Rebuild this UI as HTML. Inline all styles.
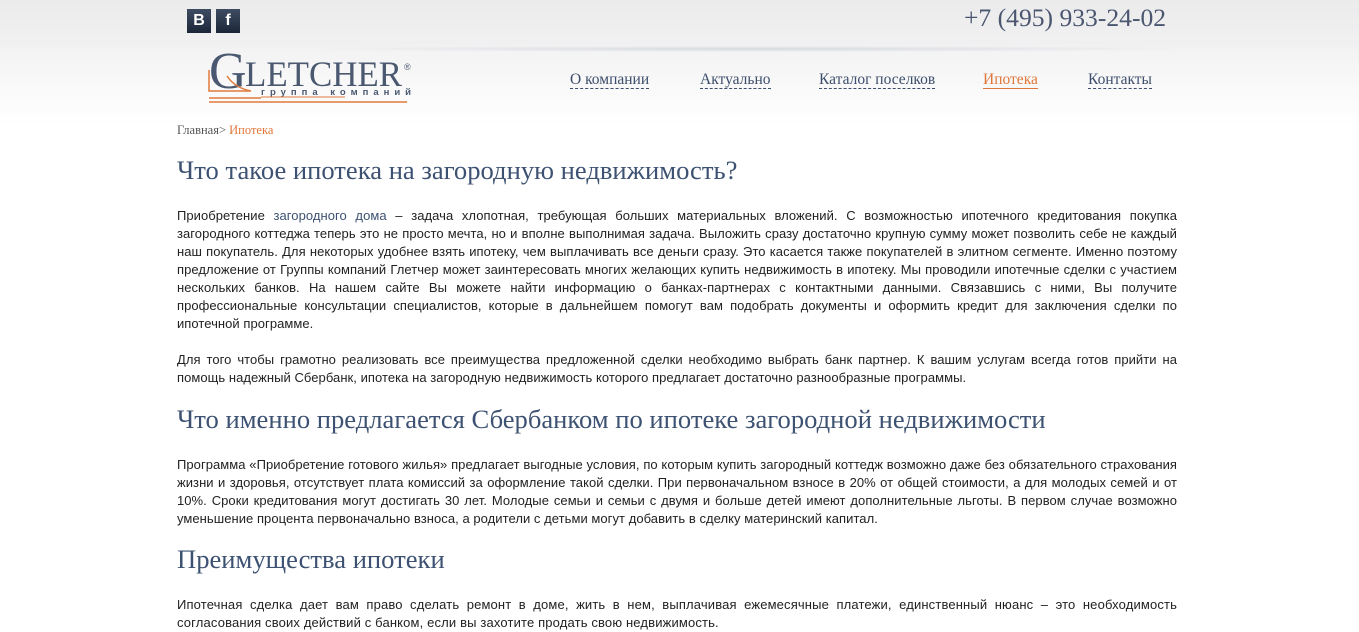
<!DOCTYPE html>
<html><head><meta charset="utf-8"><style>
body{margin:0;background:#fff;font-family:"Liberation Sans",sans-serif;}
.top{position:absolute;left:0;top:0;width:1359px;height:140px;background:linear-gradient(#ebebec 0,#f1f1f2 48px,#f3f3f4 50px,#fff 125px);}
.sh{position:absolute;left:300px;top:46px;width:900px;height:6px;background:radial-gradient(ellipse at center,rgba(160,170,185,.35),rgba(255,255,255,0) 70%);}
.soc{position:absolute;top:9px;width:24px;height:24px;background:linear-gradient(#3e4c63,#1c2638);color:#fff;font:bold 16px "Liberation Sans",sans-serif;text-align:center;line-height:24px;}
.phone{position:absolute;left:964px;top:3px;font:25.6px "Liberation Serif",serif;color:#4a5670;}
.nav a{position:absolute;top:71px;font:15.5px "Liberation Serif",serif;color:#3d4e6c;text-decoration:none;border-bottom:1px dashed #3d4e6c;line-height:17px;}
.bc{position:absolute;left:177px;top:123px;font:12.5px "Liberation Serif",serif;color:#555;}
h2{margin:0;font:normal 26.6px "Liberation Serif",serif;color:#3d5272;position:absolute;left:177px;}
p{margin:0;font-size:13px;line-height:18px;color:#222;text-align:justify;position:absolute;left:177px;width:1000px;letter-spacing:0.05px;}
a.l{color:#3d5272;text-decoration:none;}
</style></head><body>
<div class="top"></div><div class="sh"></div>
<div class="soc" style="left:187px">B</div><div class="soc" style="left:216px">f</div>
<div class="phone">+7 (495) 933-24-02</div>
<svg style="position:absolute;left:205px;top:48px" width="212" height="58">
<text x="4" y="40" font-family="Liberation Serif" font-size="52" fill="#4a5870">G</text>
<text x="40" y="38" font-family="Liberation Serif" font-size="36" fill="#4a5870" textLength="157" lengthAdjust="spacingAndGlyphs">LETCHER</text>
<text x="199" y="22" font-family="Liberation Sans" font-size="9" fill="#4a5870">®</text>
<text x="56" y="47" font-family="Liberation Sans" font-size="9.5" font-weight="bold" fill="#4a5870" textLength="150">группа компаний</text>
<path d="M4 22 V43 H46 Q30 40 22 28" fill="none" stroke="#e07b3c" stroke-width="1.5"/>
<path d="M4 50 H56 M4 54 H202" stroke="#e07b3c" stroke-width="1.5"/>
<path d="M56 49 H140" stroke="#e07b3c" stroke-width="1"/>
</svg>
<div class="nav">
<a style="left:570px">О компании</a><a style="left:700px">Актуально</a><a style="left:819px">Каталог поселков</a><a style="left:983px;color:#e0773a;border-bottom:1px solid #e0773a">Ипотека</a><a style="left:1088px">Контакты</a>
</div>
<div class="bc">Главная&gt; <span style="color:#e0773a">Ипотека</span></div>
<h2 style="top:155px">Что такое ипотека на загородную недвижимость?</h2>
<p style="top:207px">Приобретение <a class="l">загородного дома</a> – задача хлопотная, требующая больших материальных вложений. С возможностью ипотечного кредитования покупка загородного коттеджа теперь это не просто мечта, но и вполне выполнимая задача. Выложить сразу достаточно крупную сумму может позволить себе не каждый наш покупатель. Для некоторых удобнее взять ипотеку, чем выплачивать все деньги сразу. Это касается также покупателей в элитном сегменте. Именно поэтому предложение от Группы компаний Глетчер может заинтересовать многих желающих купить недвижимость в ипотеку. Мы проводили ипотечные сделки с участием нескольких банков. На нашем сайте Вы можете найти информацию о банках-партнерах с контактными данными. Связавшись с ними, Вы получите профессиональные консультации специалистов, которые в дальнейшем помогут вам подобрать документы и оформить кредит для заключения сделки по ипотечной программе.</p>
<p style="top:351px">Для того чтобы грамотно реализовать все преимущества предложенной сделки необходимо выбрать банк партнер. К вашим услугам всегда готов прийти на помощь надежный Сбербанк, ипотека на загородную недвижимость которого предлагает достаточно разнообразные программы.</p>
<h2 style="top:404px">Что именно предлагается Сбербанком по ипотеке загородной недвижимости</h2>
<p style="top:456px">Программа «Приобретение готового жилья» предлагает выгодные условия, по которым купить загородный коттедж возможно даже без обязательного страхования жизни и здоровья, отсутствует плата комиссий за оформление такой сделки. При первоначальном взносе в 20% от общей стоимости, а для молодых семей и от 10%. Сроки кредитования могут достигать 30 лет. Молодые семьи и семьи с двумя и больше детей имеют дополнительные льготы. В первом случае возможно уменьшение процента первоначально взноса, а родители с детьми могут добавить в сделку материнский капитал.</p>
<h2 style="top:544px">Преимущества ипотеки</h2>
<p style="top:596px;letter-spacing:0.15px">Ипотечная сделка дает вам право сделать ремонт в доме, жить в нем, выплачивая ежемесячные платежи, единственный нюанс – это необходимость согласования своих действий с банком, если вы захотите продать свою недвижимость.</p>
</body></html>
